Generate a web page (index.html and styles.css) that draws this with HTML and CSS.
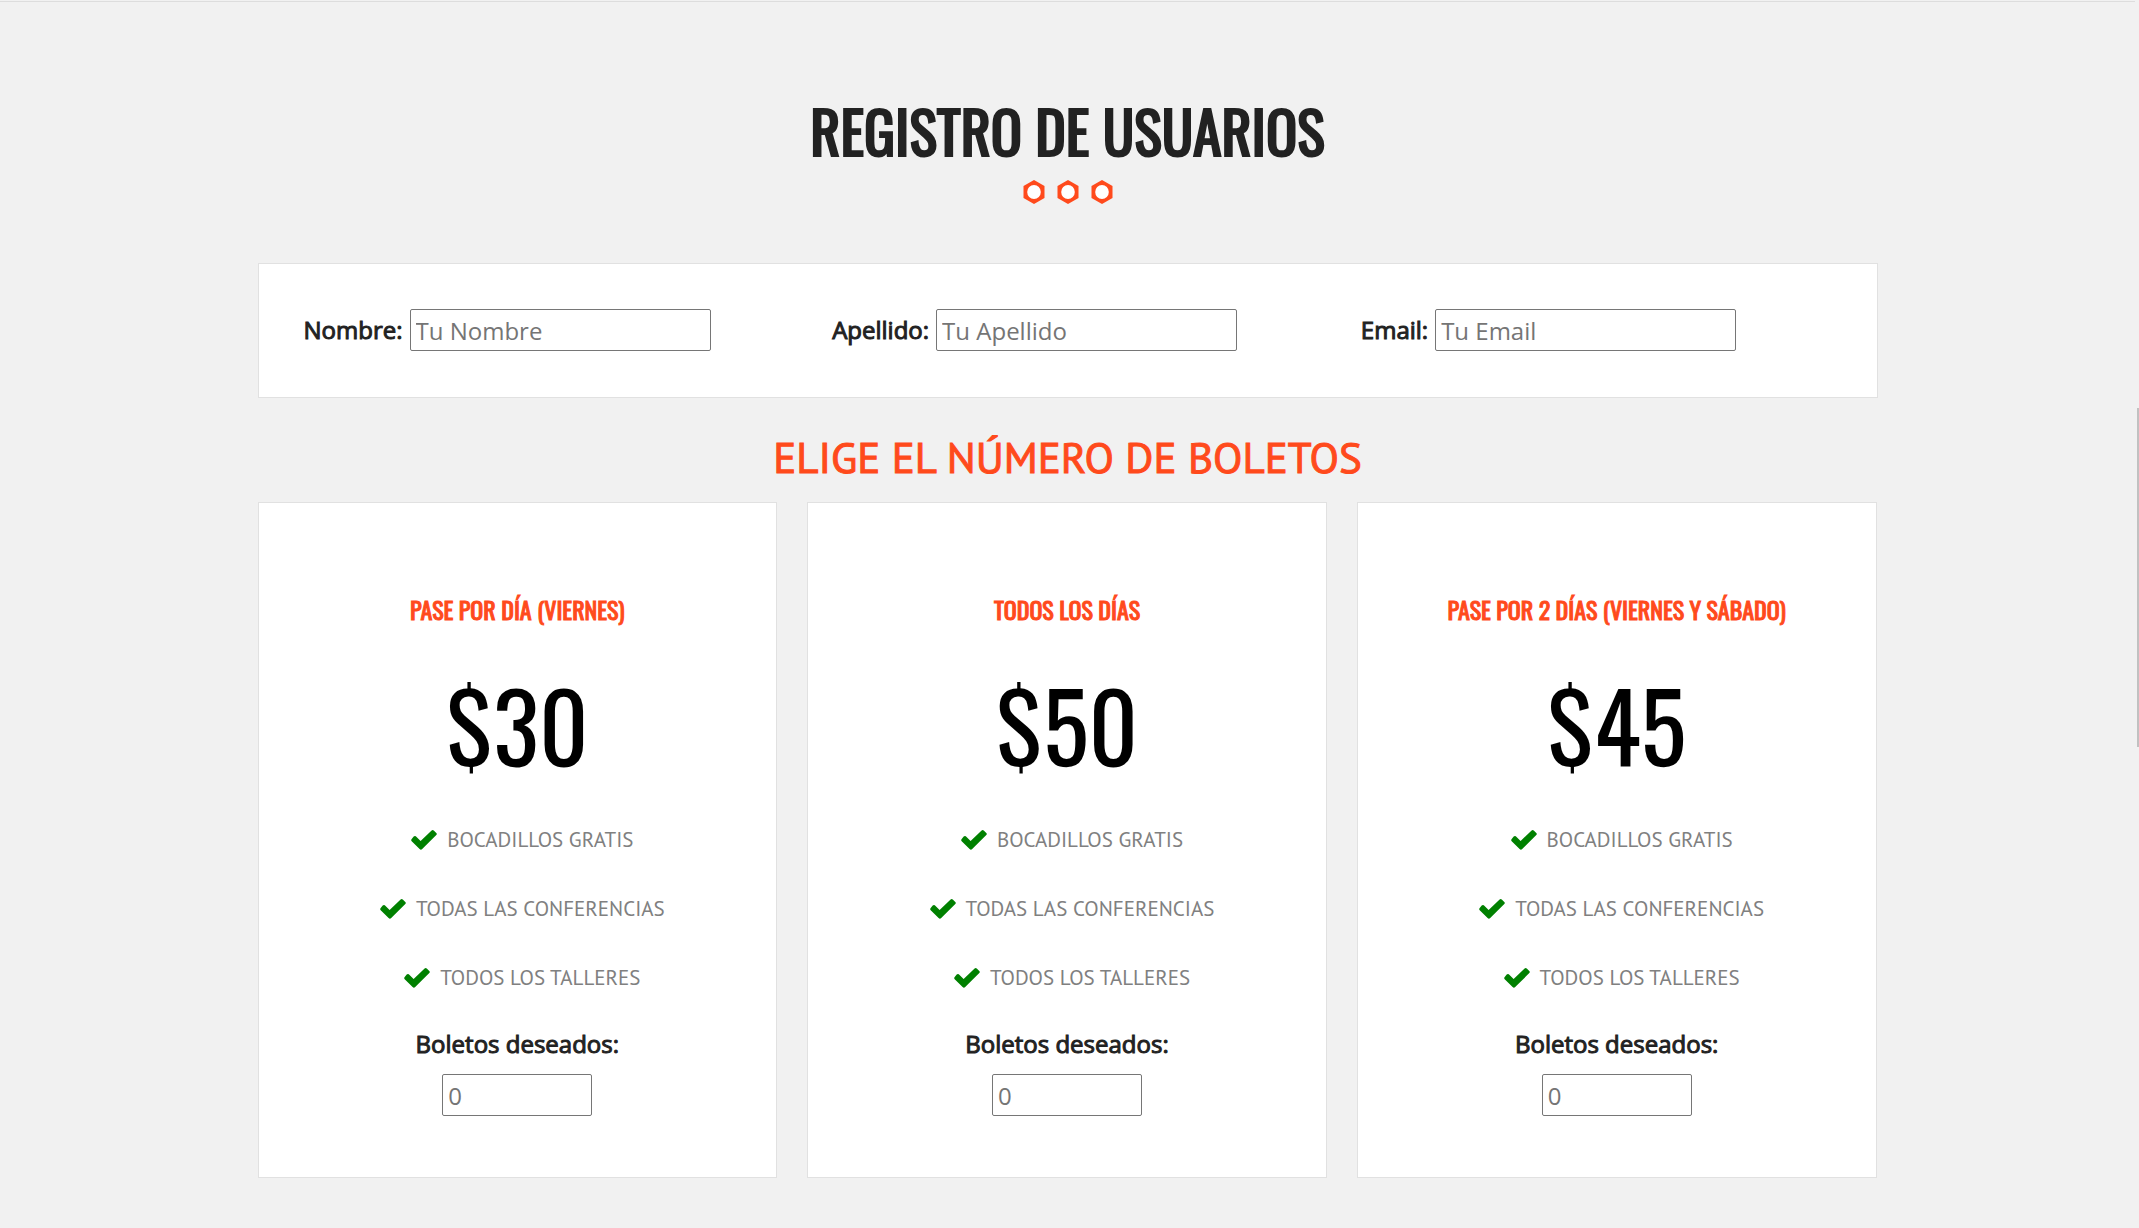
FILE: index.html
```html
<!DOCTYPE html>
<html lang="es">
<head>
<meta charset="utf-8">
<meta name="viewport" content="width=device-width, initial-scale=1">
<title>Registro de usuarios</title>
<link rel="stylesheet" href="styles.css">
</head>
<body>
<svg class="sprite" aria-hidden="true">
  <symbol id="check" viewBox="0 0 26 20">
    <path d="M4.800 6.300 9.600 11 20.600.500Q21.800-.400 23 .700L25.300 2.900Q26.300 4 25.300 5.100L11.200 19.100Q9.900 20.300 8.600 19.100L.700 11.300Q-.300 10.200.700 9.100L2.700 6.600Q3.700 5.500 4.800 6.300Z"/>
  </symbol>
  <symbol id="hexagon" viewBox="0 0 22 24">
    <path fill="#ff4a1c" d="M11 0 21.500 6V18L11 24 .500 18V6Z"/>
    <ellipse cx="11" cy="12" rx="6.800" ry="7" fill="#fff"/>
  </symbol>
</svg>
<main class="registro">
  <h2 class="titulo">Registro de usuarios</h2>
  <div class="adorno" aria-hidden="true">
    <svg><use href="#hexagon"/></svg>
    <svg><use href="#hexagon"/></svg>
    <svg><use href="#hexagon"/></svg>
  </div>
  <form>
    <div class="caja datos">
      <div class="campo">
        <label for="nombre">Nombre:</label>
        <input type="text" id="nombre" placeholder="Tu Nombre">
      </div>
      <div class="campo">
        <label for="apellido">Apellido:</label>
        <input type="text" id="apellido" placeholder="Tu Apellido">
      </div>
      <div class="campo">
        <label for="email">Email:</label>
        <input type="email" id="email" placeholder="Tu Email">
      </div>
    </div>
    <h3 class="subtitulo">Elige el número de boletos</h3>
    <ul class="precios">
      <li class="caja pase">
        <h3 class="nombre-pase">Pase por día (viernes)</h3>
        <p class="precio">$30</p>
        <ul class="incluye">
          <li><svg aria-hidden="true"><use href="#check"/></svg>Bocadillos gratis</li>
          <li><svg aria-hidden="true"><use href="#check"/></svg>Todas las conferencias</li>
          <li><svg aria-hidden="true"><use href="#check"/></svg>Todos los talleres</li>
        </ul>
        <div class="orden">
          <label for="pase-dia">Boletos deseados:</label>
          <input type="number" id="pase-dia" min="0" placeholder="0">
        </div>
      </li>
      <li class="caja pase">
        <h3 class="nombre-pase">Todos los días</h3>
        <p class="precio">$50</p>
        <ul class="incluye">
          <li><svg aria-hidden="true"><use href="#check"/></svg>Bocadillos gratis</li>
          <li><svg aria-hidden="true"><use href="#check"/></svg>Todas las conferencias</li>
          <li><svg aria-hidden="true"><use href="#check"/></svg>Todos los talleres</li>
        </ul>
        <div class="orden">
          <label for="pase-completo">Boletos deseados:</label>
          <input type="number" id="pase-completo" min="0" placeholder="0">
        </div>
      </li>
      <li class="caja pase">
        <h3 class="nombre-pase">Pase por 2 días (viernes y sábado)</h3>
        <p class="precio">$45</p>
        <ul class="incluye">
          <li><svg aria-hidden="true"><use href="#check"/></svg>Bocadillos gratis</li>
          <li><svg aria-hidden="true"><use href="#check"/></svg>Todas las conferencias</li>
          <li><svg aria-hidden="true"><use href="#check"/></svg>Todos los talleres</li>
        </ul>
        <div class="orden">
          <label for="pase-dos-dias">Boletos deseados:</label>
          <input type="number" id="pase-dos-dias" min="0" placeholder="0">
        </div>
      </li>
    </ul>
  </form>
</main>
<div class="barra" aria-hidden="true"></div>
</body>
</html>
```
FILE: styles.css
```css
* {
  box-sizing: border-box;
}

body {
  margin: 0;
  padding: 1px 4px 0 0;
  background: #f1f1f1;
  color: #222;
  font: 24px/32px "Open Sans", sans-serif;
}

h2,
h3,
p,
ul {
  margin: 0;
  padding: 0;
  font-weight: 400;
  list-style: none;
}

.sprite {
  position: absolute;
  width: 0;
  height: 0;
}

.registro {
  padding: 86px 24px 48px;
  border-top: 1px solid #ddd;
}

.registro form {
  max-width: 1620px;
  margin: 0 auto;
}

.titulo {
  font-family: Oswald, sans-serif;
  font-size: 58px;
  line-height: 84px;
  text-align: center;
  text-transform: uppercase;
  -webkit-text-stroke: 2px #222;
}

.adorno {
  display: flex;
  justify-content: center;
  gap: 12px;
  margin: 8px 0 59px;
}

.adorno svg {
  width: 22px;
  height: 24px;
}

.caja {
  background: #fff;
  border: 1px solid #e1e1e1;
}

.datos {
  display: grid;
  grid-template-columns: repeat(3, 1fr);
  gap: 58px;
  padding: 45px 45px 46px;
}

.campo {
  display: flex;
  align-items: center;
  gap: 7px;
}

label {
  -webkit-text-stroke: 1px #222;
}

input {
  width: 301px;
  height: 42px;
  padding: 1px 5px;
  border: 1px solid #767676;
  border-radius: 2px;
  background: #fff;
  color: #222;
  font: inherit;
}

input::placeholder {
  color: #757575;
}

.subtitulo {
  margin: 28px 0 14px;
  color: #ff4a1c;
  font-family: "PT Sans", sans-serif;
  font-size: 43px;
  line-height: 62px;
  text-align: center;
  text-transform: uppercase;
  -webkit-text-stroke: 1px #ff4a1c;
}

.precios {
  display: grid;
  grid-template-columns: repeat(3, 1fr);
  gap: 30px;
  padding-right: 1px;
}

.pase {
  padding: 88px 16px 61px;
  text-align: center;
}

.nombre-pase {
  color: #ff4a1c;
  font-family: Oswald, sans-serif;
  font-size: 24px;
  line-height: 36px;
  text-transform: uppercase;
  -webkit-text-stroke: 1px #ff4a1c;
}

.precio {
  margin: 24px 0 30px;
  color: #000;
  font-family: Oswald, sans-serif;
  font-size: 96px;
  line-height: 144px;
}

.incluye {
  display: grid;
  gap: 40px;
  margin-bottom: 36px;
}

.incluye li {
  display: flex;
  align-items: center;
  justify-content: center;
  gap: 10px;
  padding-left: 10px;
  color: #808080;
  font-family: "PT Sans", sans-serif;
  font-size: 21px;
  line-height: 29px;
  text-transform: uppercase;
}

.incluye svg {
  width: 26px;
  height: 20px;
  fill: #008000;
}

.orden {
  display: flex;
  flex-direction: column;
  align-items: center;
  gap: 14px;
}

.orden input {
  width: 150px;
}

.barra {
  position: fixed;
  top: 408px;
  right: 0;
  width: 2px;
  height: 339px;
  background: #c1c1c1;
}
```
